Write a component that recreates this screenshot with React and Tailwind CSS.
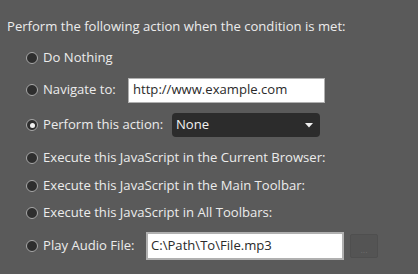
import React from "react";

function Radio({ checked }) {
  return (
    <span className="relative flex h-[12px] w-[12px] shrink-0 items-center justify-center rounded-full border border-[#a8a8a8] bg-[#2e2e2e]">
      {checked && <span className="h-[5px] w-[5px] rounded-full bg-[#f0f0f0]" />}
    </span>
  );
}

function Row({ h, checked, label, labelW, children }) {
  return (
    <div className={`flex items-center ${h}`}>
      <Radio checked={checked} />
      <span className={`ml-[5px] shrink-0 whitespace-nowrap ${labelW || ""}`}>{label}</span>
      {children}
    </div>
  );
}

export default function App() {
  return (
    <div
      className="h-[274px] w-[418px] overflow-hidden bg-[#5a5a5a] text-[13.1px] leading-none text-[#ececec]"
      style={{ fontFamily: '"Open Sans", sans-serif' }}
    >
      <div className="flex h-[42px] items-center pl-[7px] pt-[12px] whitespace-nowrap">
        Perform the following action when the condition is met:
      </div>
      <div className="flex flex-col pl-[26px]">
        <Row h="h-[32px]" label="Do Nothing" />
        <Row h="h-[32px]" label="Navigate to:" labelW="w-[85px]">
          <div className="flex h-[25px] w-[197px] items-center border border-[#b0b0b0] bg-white pl-[4px] text-[#2a2a2a]">
            http://www.example.com
          </div>
        </Row>
        <Row h="h-[38px]" checked label="Perform this action:" labelW="w-[129px]">
          <div className="flex h-[24px] w-[148px] items-center justify-between rounded-[4px] bg-[#2c2c2c] pl-[4px] pr-[7px] text-[#f2f2f2]">
            <span>None</span>
            <svg width="8" height="5" viewBox="0 0 8 5">
              <path d="M0 0 L8 0 L4 4.5 Z" fill="#f0f0f0" />
            </svg>
          </div>
        </Row>
        <Row h="h-[28px]" label="Execute this JavaScript in the Current Browser:" />
        <Row h="h-[28px]" label="Execute this JavaScript in the Main Toolbar:" />
        <Row h="h-[26px]" label="Execute this JavaScript in All Toolbars:" />
        <Row h="h-[40px]" label="Play Audio File:" labelW="w-[103px]">
          <div className="flex h-[28px] w-[198px] items-center border-2 border-[#b0b0b0] bg-white pl-[3px] text-[#2a2a2a]">
            C:\Path\To\File.mp3
          </div>
          <div className="ml-[6px] flex h-[24px] w-[28px] items-end justify-center rounded-[2px] border border-[#4f4f4f] bg-[#545454] pb-[3px] text-[9px] leading-none text-[#6e6e6e]">
            ...
          </div>
        </Row>
      </div>
    </div>
  );
}
